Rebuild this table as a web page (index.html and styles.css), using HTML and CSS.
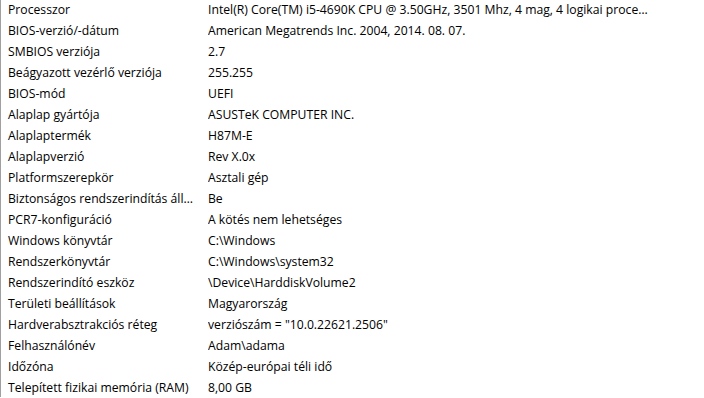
FILE: index.html
```html
<!DOCTYPE html>
<html lang="hu">
<head>
<meta charset="utf-8">
<link rel="stylesheet" href="styles.css">
</head>
<body>
<div class="list">
  <div class="row"><div class="name">Processzor</div><div class="value">Intel(R) Core(TM) i5-4690K CPU @ 3.50GHz, 3501 Mhz, 4 mag, 4 logikai processzor</div></div>
  <div class="row"><div class="name">BIOS-verzió/-dátum</div><div class="value">American Megatrends Inc. 2004, 2014. 08. 07.</div></div>
  <div class="row"><div class="name">SMBIOS verziója</div><div class="value">2.7</div></div>
  <div class="row"><div class="name">Beágyazott vezérlő verziója</div><div class="value">255.255</div></div>
  <div class="row"><div class="name">BIOS-mód</div><div class="value">UEFI</div></div>
  <div class="row"><div class="name">Alaplap gyártója</div><div class="value">ASUSTeK COMPUTER INC.</div></div>
  <div class="row"><div class="name">Alaplaptermék</div><div class="value">H87M-E</div></div>
  <div class="row"><div class="name">Alaplapverzió</div><div class="value">Rev X.0x</div></div>
  <div class="row"><div class="name">Platformszerepkör</div><div class="value">Asztali gép</div></div>
  <div class="row"><div class="name">Biztonságos rendszerindítás állapota</div><div class="value">Be</div></div>
  <div class="row"><div class="name">PCR7-konfiguráció</div><div class="value">A kötés nem lehetséges</div></div>
  <div class="row"><div class="name">Windows könyvtár</div><div class="value">C:\Windows</div></div>
  <div class="row"><div class="name">Rendszerkönyvtár</div><div class="value">C:\Windows\system32</div></div>
  <div class="row"><div class="name">Rendszerindító eszköz</div><div class="value">\Device\HarddiskVolume2</div></div>
  <div class="row"><div class="name">Területi beállítások</div><div class="value">Magyarország</div></div>
  <div class="row"><div class="name">Hardverabsztrakciós réteg</div><div class="value">verziószám = "10.0.22621.2506"</div></div>
  <div class="row"><div class="name">Felhasználónév</div><div class="value">Adam\adama</div></div>
  <div class="row"><div class="name">Időzóna</div><div class="value">Közép-európai téli idő</div></div>
  <div class="row"><div class="name">Telepített fizikai memória (RAM)</div><div class="value">8,00 GB</div></div>
</div>
</body>
</html>
```

FILE: styles.css
```css
html, body {
  margin: 0;
  padding: 0;
  background: #ffffff;
  overflow: hidden;
}
.list {
  height: 398px;
  border-left: 1px solid #a0a0a0;
  margin-top: -1px;
  font-family: "Open Sans", "Noto Sans", sans-serif;
  font-size: 12.2px;
  color: #000000;
}
.row {
  display: flex;
  height: 21px;
  line-height: 21px;
}
.name {
  width: 186px;
  flex: none;
  padding-left: 7px;
  padding-right: 14px;
  white-space: nowrap;
  overflow: hidden;
  text-overflow: ellipsis;
}
.value {
  width: 441px;
  flex: none;
  white-space: nowrap;
  overflow: hidden;
  text-overflow: ellipsis;
}
```
